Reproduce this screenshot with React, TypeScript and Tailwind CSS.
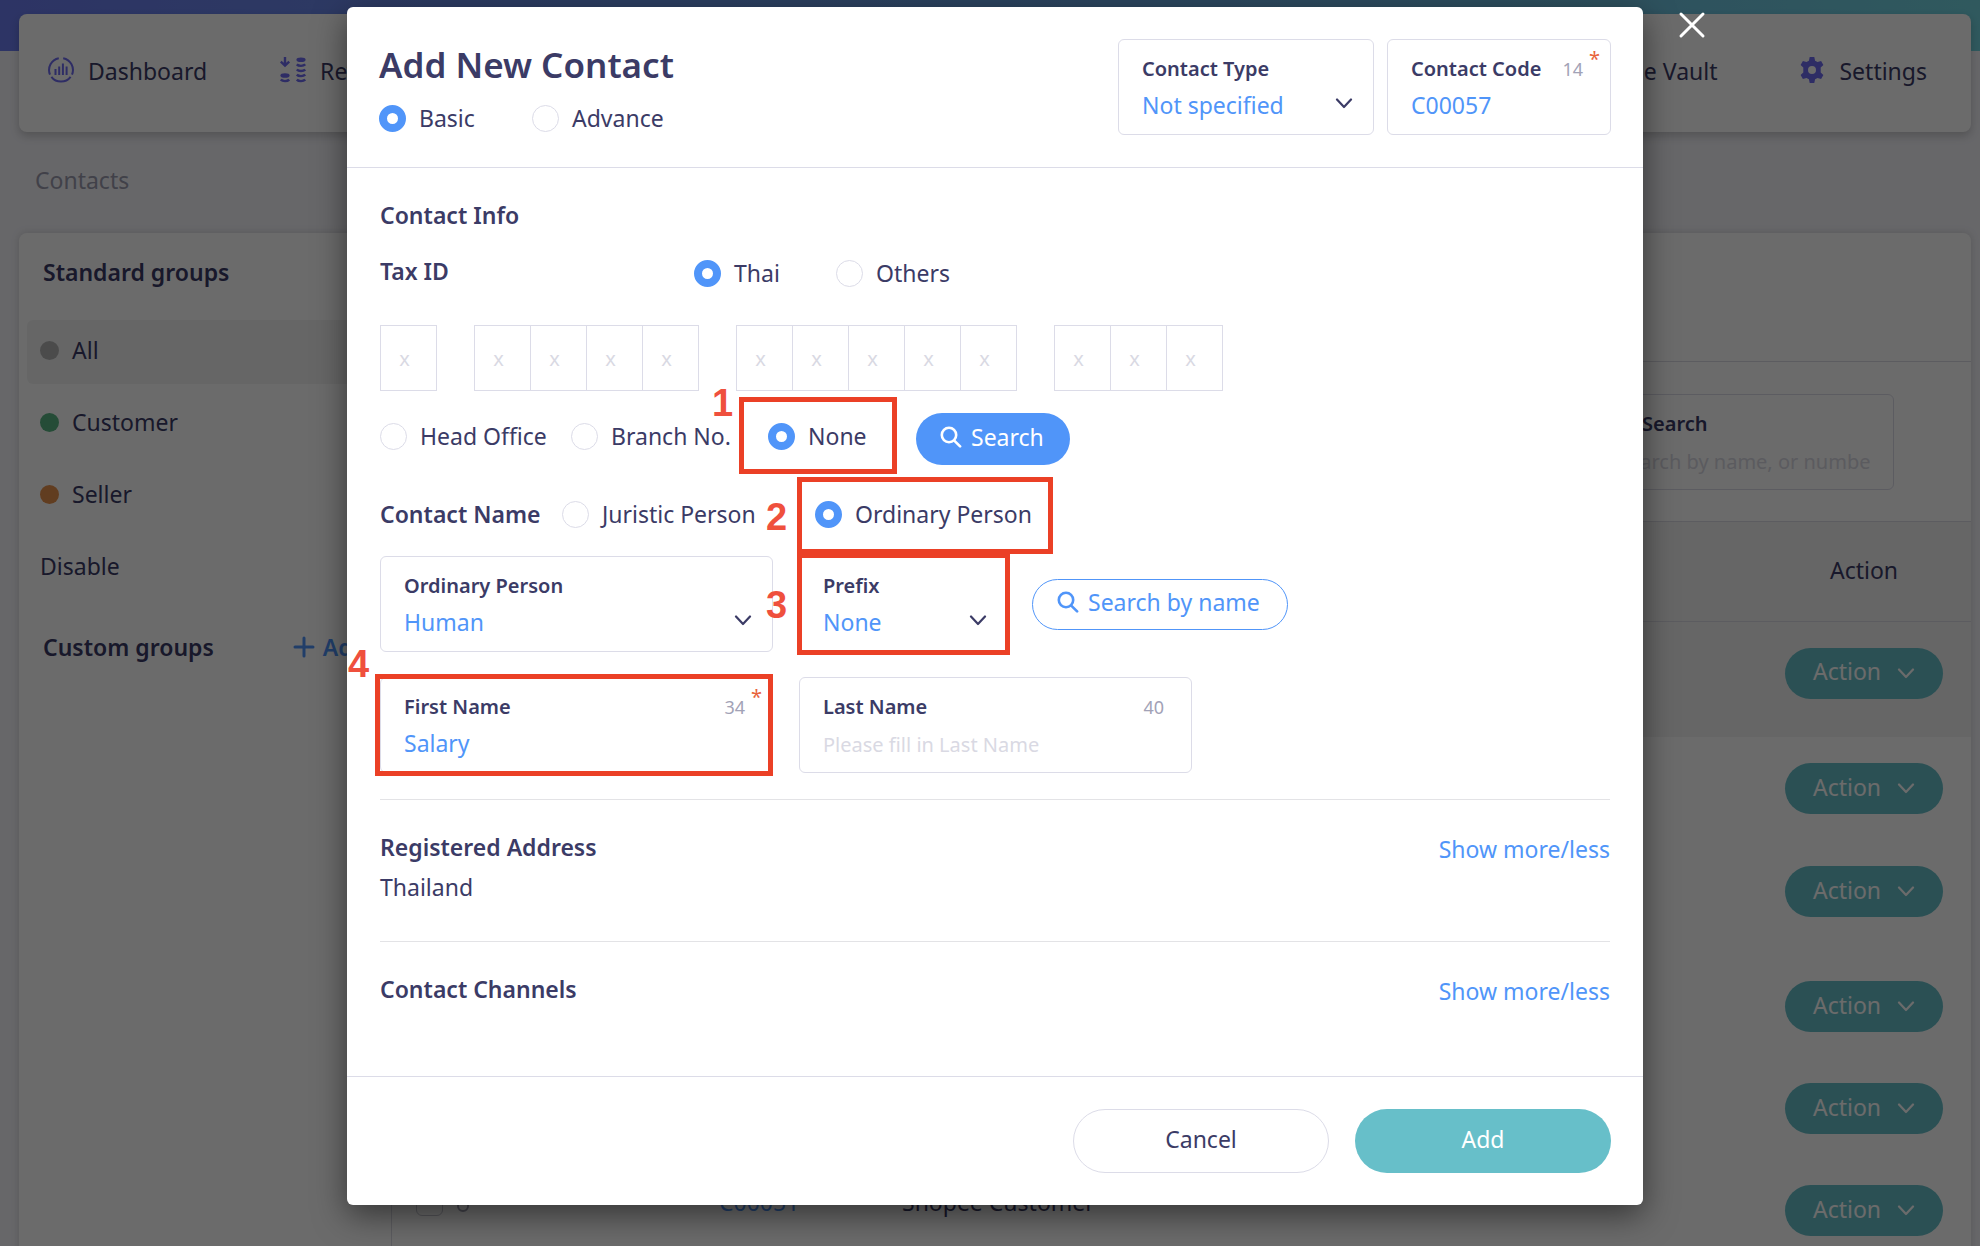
import React, { useId } from "react";

type IconProps = { className?: string };

function ChevronIcon({ className = "" }: IconProps) {
  return (
    <svg viewBox="0 0 18 11" width="18" height="11" fill="none" stroke="currentColor" strokeWidth="2.2" strokeLinecap="round" strokeLinejoin="round" className={className} aria-hidden="true">
      <path d="M2 1.5 9 9l7-7.5" />
    </svg>
  );
}

function SearchIcon() {
  return (
    <svg viewBox="0 0 22 22" width="22" height="22" fill="none" stroke="currentColor" strokeWidth="2.6" strokeLinecap="round" aria-hidden="true">
      <circle cx="9" cy="9" r="7.2" />
      <path d="m14.5 14.8 5.6 5.6" />
    </svg>
  );
}

function DashboardIcon() {
  return (
    <svg viewBox="0 0 26 26" width="26" height="26" fill="none" stroke="#6f6bf0" strokeWidth="2" aria-hidden="true">
      <path d="M10.8 1.2A12 12 0 0 0 2 17.6M15.2 1.2A12 12 0 0 1 24 17.6M3.4 19.8a12 12 0 0 0 19.2 0" />
      <path d="M7.5 12v6M11.2 9.500v8.500M14.900 6.500V18M18.600 9.500V18" />
    </svg>
  );
}

function RevenueIcon() {
  return (
    <svg viewBox="0 0 26 26" width="26" height="26" fill="none" stroke="#6f6bf0" strokeWidth="2.4" aria-hidden="true">
      <path d="M5 0v8M.8 4.600 5 8.600l4.200-4" />
      <ellipse cx="5" cy="18.500" rx="4.600" ry="2.300" fill="#6f6bf0" stroke="none" />
      <ellipse cx="21" cy="2.800" rx="4.600" ry="2.300" fill="#6f6bf0" stroke="none" />
      <path d="M.8 22.600c1.800 2 6.600 2 8.400 0M16.800 7.400c1.800 2 6.600 2 8.400 0M16.800 12.500c1.800 2 6.600 2 8.400 0M16.800 17.600c1.800 2 6.600 2 8.400 0M16.800 22.600c1.800 2 6.600 2 8.400 0" />
    </svg>
  );
}

function GearIcon() {
  return (
    <svg viewBox="0 0 26 26" width="26" height="26" fill="#6f6bf0" aria-hidden="true">
      <path
        fillRule="evenodd"
        d="M10.700 0h4.600l.8 3.700 2.400 1.400 3.600-1.200 2.300 4-2.700 2.500v5.200l2.700 2.500-2.300 4-3.600-1.200-2.400 1.400-.8 3.700h-4.600l-.8-3.700-2.400-1.400-3.600 1.200-2.300-4 2.700-2.500v-5.200L1.600 7.900l2.300-4 3.600 1.200 2.400-1.400zM13 9a4 4 0 1 0 0 8 4 4 0 0 0 0-8z"
      />
    </svg>
  );
}

function Radio({ name, label, checked = false, className = "h-8" }: { name: string; label: string; checked?: boolean; className?: string }) {
  return (
    <label className={`flex items-center gap-[13px] whitespace-nowrap ${className}`}>
      <input
        type="radio"
        name={name}
        defaultChecked={checked}
        className="size-[27px] shrink-0 appearance-none rounded-full border border-[#dcdce8] bg-white checked:border-8 checked:border-[#5095f9]"
      />
      {label}
    </label>
  );
}

function Field({
  label,
  counter,
  required = false,
  options,
  value,
  placeholder,
  labelClassName = "",
  className = "",
}: {
  label: string;
  counter?: string;
  required?: boolean;
  options?: string[];
  value?: string;
  placeholder?: string;
  labelClassName?: string;
  className?: string;
}) {
  const id = useId();
  return (
    <div className={`relative flex h-24 flex-col gap-[6px] rounded-md border border-[#dcdce8] px-[23px] pt-[15px] ${className}`}>
      <div className="flex h-7 items-center justify-between pr-1">
        <label htmlFor={id} className={`text-[20px] leading-7 font-semibold whitespace-nowrap ${labelClassName}`}>
          {label}
        </label>
        {counter && <span className="text-[18px] leading-7 text-[#a2a2b6]">{counter}</span>}
      </div>
      {required && <span className="absolute top-[9px] right-[10px] text-[20px] leading-5 text-[#e8643c]">*</span>}
      {options ? (
        <>
          <select id={id} className="h-8 w-full appearance-none bg-transparent leading-8 text-[#5095f9] outline-none">
            {options.map((o) => (
              <option key={o}>{o}</option>
            ))}
          </select>
          <ChevronIcon className="pointer-events-none absolute top-[58px] right-5" />
        </>
      ) : (
        <input
          id={id}
          type="text"
          defaultValue={value}
          placeholder={placeholder}
          className="h-8 w-full bg-transparent leading-8 text-[#5095f9] outline-none placeholder:text-[20px] placeholder:text-[#d9d9e3]"
        />
      )}
    </div>
  );
}

function Callout({ step, box, mark }: { step: string; box: string; mark: string }) {
  return (
    <div className={`pointer-events-none absolute z-10 border-[5px] border-[#eb4026] ${box}`}>
      <span className={`absolute font-['Liberation_Sans',sans-serif] text-[38px] leading-[38px] font-bold text-[#ef503d] ${mark}`}>{step}</span>
    </div>
  );
}

const taxGroups = [1, 4, 5, 3];

const groups = [
  { name: "All", dot: "bg-[#b4b4b4]", row: "bg-[#f3f4f4]" },
  { name: "Customer", dot: "bg-[#5ab583]", row: "" },
  { name: "Seller", dot: "bg-[#e8924e]", row: "" },
];

const rows = [
  { height: "h-[116px]", bg: "bg-[#f3f3f3]" },
  { height: "h-[103px]", bg: "" },
  { height: "h-[115px]", bg: "" },
  { height: "h-[102px]", bg: "" },
  { height: "h-[102px]", bg: "" },
  { height: "h-[102px]", bg: "", code: "C00051", name: "Shopee Customer" },
];

function ContactsPage() {
  return (
    <div className="h-full overflow-hidden bg-[#f5f5fa]">
      <div className="h-[51px] bg-linear-to-r from-[#6c7cf0] via-[#68a0e2] to-[#72d4e0]" />
      <nav className="relative mr-[9px] -mt-[37px] ml-[19px] flex h-[118px] items-center justify-between rounded-lg bg-white pr-[44px] pb-[6px] pl-[29px] shadow-[0_4px_10px_rgba(0,0,0,0.2)]">
        <div className="flex items-center gap-[73px]">
          <a href="#dashboard" className="flex items-center gap-[14px]">
            <DashboardIcon />
            <span className="pt-[2px]">Dashboard</span>
          </a>
          <a href="#revenue" className="flex items-center gap-[14px]">
            <RevenueIcon />
            <span className="pt-[2px]">Revenue</span>
          </a>
        </div>
        <div className="flex items-center gap-[82px]">
          <a href="#vault" className="pt-[2px]">
            File Vault
          </a>
          <a href="#settings" className="flex items-center gap-[14px]">
            <GearIcon />
            <span className="pt-[2px]">Settings</span>
          </a>
        </div>
      </nav>

      <div className="mt-[32px] mb-[37px] ml-[35px] leading-8 text-[#9c9cae]">Contacts</div>

      <main className="mr-[9px] ml-[19px] flex rounded-t-lg bg-white shadow-[0_0_8px_rgba(0,0,0,0.15)]">
        <aside className="w-[372px] shrink-0 pt-[23px]">
          <h2 className="pl-6 text-[23px] leading-8 font-semibold">Standard groups</h2>
          <ul className="mt-8 mr-2 ml-2 flex flex-col gap-2">
            {groups.map((g) => (
              <li key={g.name} className={`flex h-16 items-center gap-[13px] rounded-md pb-1 pl-[13px] ${g.row}`}>
                <span className={`size-[19px] rounded-full ${g.dot}`} />
                {g.name}
              </li>
            ))}
            <li className="flex h-16 items-center pb-1 pl-[13px]">Disable</li>
          </ul>
          <div className="mt-[31px] flex items-center justify-between pr-6 pl-6 text-[23px] leading-8 font-semibold">
            <h2>Custom groups</h2>
            <button type="button" className="flex items-center gap-2 text-[#5095f9]">
              <svg viewBox="0 0 22 22" width="22" height="22" stroke="currentColor" strokeWidth="3" strokeLinecap="round" aria-hidden="true">
                <path d="M11 2v18M2 11h18" />
              </svg>
              Add
            </button>
          </div>
        </aside>

        <section className="min-w-0 grow border-l border-[#dcdce4]">
          <div className="h-32" />
          <div className="flex h-[161px] items-start justify-end border-y border-[#dcdce4] pt-8 pr-[77px]">
            <Field label="Search" placeholder="Search by name, or number" labelClassName="pl-6" className="w-[300px]" />
          </div>
          <table className="w-full table-fixed border-collapse">
            <colgroup>
              <col className="w-[327px]" />
              <col className="w-[183px]" />
              <col />
              <col className="w-[186px]" />
            </colgroup>
            <thead>
              <tr className="h-[99px] border-b border-[#dcdce4] bg-[#f3f3f3]">
                <th colSpan={3} />
                <th className="pr-7 pb-[2px] text-center font-normal">Action</th>
              </tr>
            </thead>
            <tbody>
              {rows.map((r, i) => (
                <tr key={i} className={`align-top ${r.height} ${r.bg}`}>
                  <td className="pt-[27px] pl-6">
                    {r.code && (
                      <label className="flex items-center gap-[13px] text-[#a2a2b6]">
                        <input type="checkbox" className="mt-[3px] size-[27px] appearance-none rounded-md border border-[#c8c8d2]" aria-label="Select contact" />
                        <svg viewBox="0 0 14 24" width="14" height="24" fill="none" stroke="currentColor" strokeWidth="2" aria-hidden="true">
                          <rect x="2" y="2" width="10" height="20" rx="5" />
                        </svg>
                      </label>
                    )}
                  </td>
                  <td className="pt-[27px] leading-8">
                    {r.code && (
                      <a href="#contact" className="text-[#5095f9]">
                        {r.code}
                      </a>
                    )}
                  </td>
                  <td className="pt-[27px] leading-8">{r.name}</td>
                  <td className="pt-[26px] pr-7">
                    <button type="button" className="flex h-[51px] w-full items-center justify-center gap-4 rounded-full bg-[#67bfc9] pb-1 text-white">
                      Action
                      <ChevronIcon className="mt-1" />
                    </button>
                  </td>
                </tr>
              ))}
            </tbody>
          </table>
        </section>
      </main>
    </div>
  );
}

function ContactDialog() {
  return (
    <div role="dialog" aria-label="Add New Contact" className="relative w-full max-w-[1296px] rounded-md bg-white shadow-[0_10px_32px_rgba(0,0,0,0.5)]">
      <button type="button" aria-label="Close" className="absolute top-[4px] -right-[63px] text-white">
        <svg viewBox="0 0 28 28" width="28" height="28" stroke="currentColor" strokeWidth="3" strokeLinecap="round" aria-hidden="true">
          <path d="M3 3l22 22M25 3 3 25" />
        </svg>
      </button>

      <header className="flex items-start justify-between border-b border-[#dcdce8] px-8 py-8">
        <div>
          <h1 className="text-[35px] leading-[52px] font-semibold">Add New Contact</h1>
          <div className="mt-[11px] flex">
            <Radio name="mode" label="Basic" checked className="h-8 w-[153px]" />
            <Radio name="mode" label="Advance" />
          </div>
        </div>
        <div className="flex gap-[13px]">
          <Field label="Contact Type" options={["Not specified"]} className="w-64" />
          <Field label="Contact Code" counter="14" required value="C00057" className="w-56" />
        </div>
      </header>

      <form className="px-[33px]">
        <h2 className="pt-[31px] text-[23px] leading-8 font-semibold">Contact Info</h2>
        <div className="mt-6 flex items-start">
          <h3 className="w-[314px] text-[23px] leading-8 font-semibold">Tax ID</h3>
          <Radio name="nation" label="Thai" checked className="h-9 w-[142px]" />
          <Radio name="nation" label="Others" className="h-9" />
        </div>

        <div className="mt-[34px] flex gap-[37px]">
          {taxGroups.map((count, g) => (
            <div key={g} className="flex border-l border-[#dcdce8]">
              {Array.from({ length: count }, (_, i) => (
                <input
                  key={i}
                  type="text"
                  maxLength={1}
                  placeholder="x"
                  aria-label={`Tax ID group ${g + 1} digit ${i + 1}`}
                  className="h-[66px] w-14 border-y border-r border-[#dcdce8] pr-2 text-center text-[20px] outline-none placeholder:text-[#d9d9e3]"
                />
              ))}
            </div>
          ))}
        </div>

        <div className="mt-[22px] flex items-start">
          <Radio name="branch" label="Head Office" className="h-[46px] w-[191px]" />
          <Radio name="branch" label="Branch No." className="h-[46px] w-[197px]" />
          <div className="relative w-[148px]">
            <Radio name="branch" label="None" checked className="h-[46px]" />
            <Callout step="1" box="-top-4 -bottom-[15px] -left-[29px] right-[19px]" mark="-left-8 -top-[18px]" />
          </div>
          <button type="button" className="flex h-[52px] items-center gap-[9px] rounded-full bg-[#5095f9] pr-[26px] pb-1 pl-6 text-white">
            <SearchIcon />
            Search
          </button>
        </div>

        <div className="mt-[33px] flex">
          <h3 className="w-[182px] text-[23px] leading-8 font-semibold">Contact Name</h3>
          <Radio name="person" label="Juristic Person" className="h-8 w-[253px]" />
          <div className="relative w-[218px]">
            <Radio name="person" label="Ordinary Person" checked />
            <Callout step="2" box="-top-[21px] -bottom-6 -left-[18px] -right-5" mark="-left-9 top-4" />
          </div>
        </div>

        <div className="mt-[26px] flex items-center">
          <Field label="Ordinary Person" options={["Human"]} className="w-[393px]" />
          <div className="relative ml-[26px] w-[209px]">
            <Field label="Prefix" options={["None"]} />
            <Callout step="3" box="-inset-x-[2px] -inset-y-[3px]" mark="-left-9 top-7" />
          </div>
          <button type="button" className="ml-6 flex h-[51px] items-center gap-[9px] rounded-full border border-[#5095f9] pr-[27px] pb-1 pl-6 text-[#5095f9]">
            <SearchIcon />
            Search by name
          </button>
        </div>

        <div className="mt-[25px] flex gap-[26px]">
          <div className="relative w-[393px]">
            <Field label="First Name" counter="34" required value="Salary" />
            <Callout step="4" box="-left-[5px] right-0 -inset-y-[3px]" mark="-left-8 -top-[34px]" />
          </div>
          <Field label="Last Name" counter="40" placeholder="Please fill in Last Name" className="w-[393px]" />
        </div>

        <section className="mt-[26px] border-t border-[#e3e3e6] pt-[31px] pb-[38px]">
          <div className="flex items-start justify-between">
            <h2 className="text-[23px] leading-8 font-semibold">Registered Address</h2>
            <a href="#address" className="leading-9 text-[#5095f9]">
              Show more/less
            </a>
          </div>
          <p className="mt-1 leading-8">Thailand</p>
        </section>

        <section className="border-t border-[#e3e3e6] pt-[31px] pb-[67px]">
          <div className="flex items-start justify-between">
            <h2 className="text-[23px] leading-8 font-semibold">Contact Channels</h2>
            <a href="#channels" className="leading-9 text-[#5095f9]">
              Show more/less
            </a>
          </div>
        </section>
      </form>

      <footer className="flex justify-end gap-[26px] border-t border-[#dcdce8] px-8 py-8">
        <button type="button" className="h-16 w-64 rounded-full border border-[#dcdce8] pb-1">
          Cancel
        </button>
        <button type="button" className="h-16 w-64 rounded-full bg-[#67bfc9] pb-1 text-white">
          Add
        </button>
      </footer>
    </div>
  );
}

export default function App() {
  return (
    <div className="relative h-screen overflow-hidden font-['Noto_Sans',sans-serif] text-[23px] leading-8 font-normal text-[#3b3b66]">
      <ContactsPage />
      <div className="absolute inset-0 flex items-start justify-center overflow-hidden bg-black/58 pt-[7px] pl-[10px]">
        <ContactDialog />
      </div>
    </div>
  );
}
